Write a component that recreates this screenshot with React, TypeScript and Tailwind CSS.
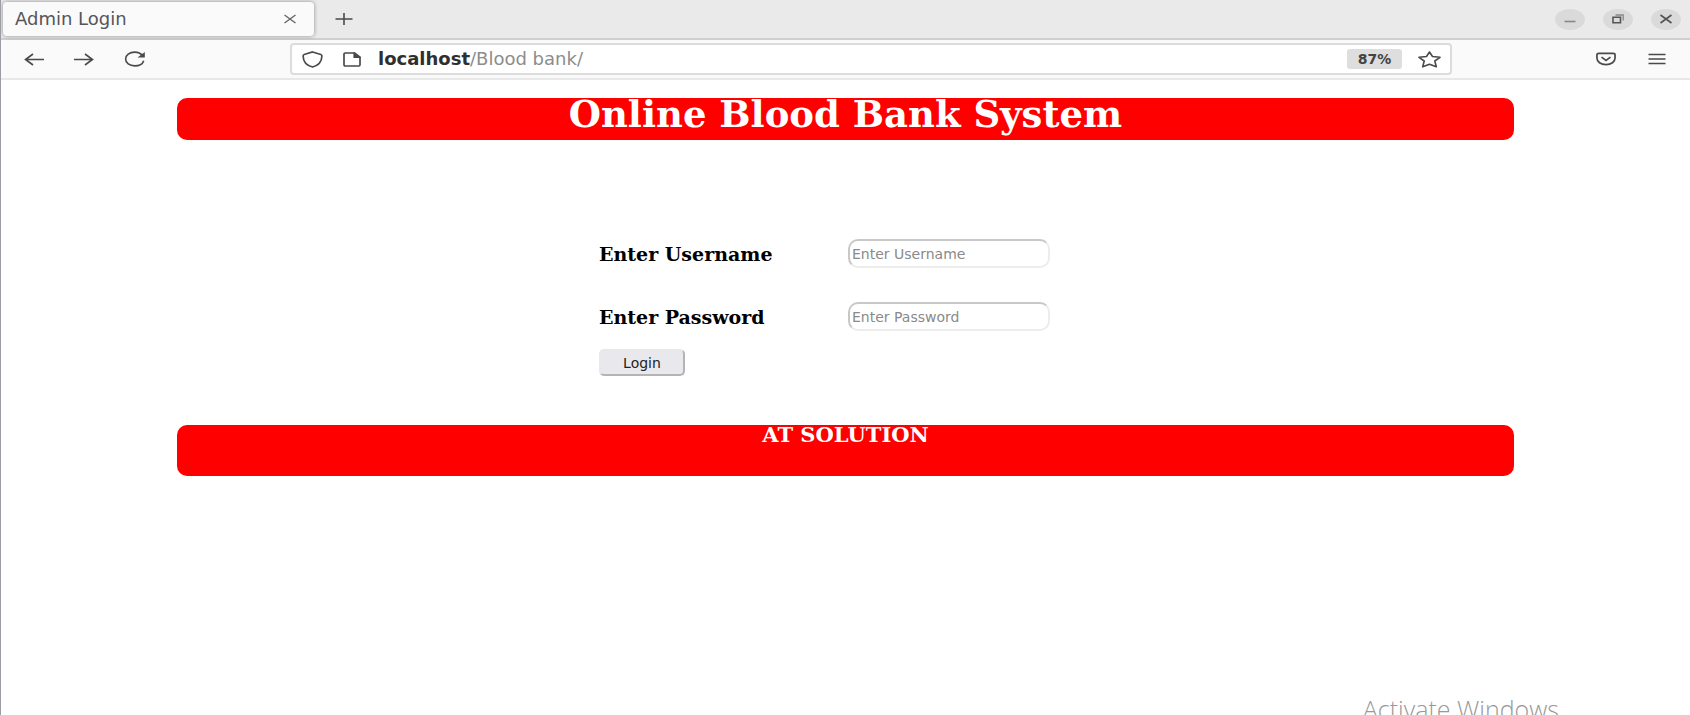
import type { ReactNode } from "react";

function IconButton({ label, className = "", children }: { label: string; className?: string; children: ReactNode }) {
  return (
    <button type="button" aria-label={label} className={`flex shrink-0 items-center justify-center ${className}`}>
      {children}
    </button>
  );
}

const stroke = { fill: "none", stroke: "currentColor", strokeWidth: 1.6 } as const;

function TabStrip() {
  return (
    <div className="flex h-10 items-center border-b-2 border-[#cfcfcf] bg-[#eaeaea] pl-0.5 pr-[9px]">
      <div className="flex h-[34px] w-[311px] items-center justify-between rounded-[4px] bg-[#fafafa] pl-3 pr-4 shadow-[0_0_4px_rgba(0,0,0,0.4)]">
        <span className="text-[18px] leading-6 text-[#55555c]">Admin Login</span>
        <IconButton label="Close tab" className="h-5 w-4 text-[#666]">
          <svg width="14" height="10" viewBox="0 0 14 10" {...stroke} strokeWidth={1.4}>
            <path d="M1.5 1l11 8M12.5 1l-11 8" />
          </svg>
        </IconButton>
      </div>
      <IconButton label="New tab" className="ml-4 h-7 w-7 text-[#4a4a4a]">
        <svg width="18" height="14" viewBox="0 0 18 14" {...stroke}>
          <path d="M0.5 7h17M9 1v12" />
        </svg>
      </IconButton>
      <div className="ml-auto flex gap-[18px] text-[#555]">
        <IconButton label="Minimize" className="h-[21px] w-[30px] rounded-[50%] bg-[#dadada]">
          <svg width="14" height="12" viewBox="0 0 14 12" {...stroke} stroke="#888">
            <path d="M1.5 8.5h11" />
          </svg>
        </IconButton>
        <IconButton label="Restore" className="h-[21px] w-[30px] rounded-[50%] bg-[#dadada]">
          <svg width="14" height="10" viewBox="0 0 14 10" {...stroke}>
            <path d="M2 3.2h7.5v5.6H2z" />
            <path d="M4.5 1h7.7v5.5" stroke="#888" strokeWidth="1.3" />
          </svg>
        </IconButton>
        <IconButton label="Close window" className="h-[21px] w-[30px] rounded-[50%] bg-[#dadada]">
          <svg width="14" height="10" viewBox="0 0 14 10" {...stroke} strokeWidth={1.7}>
            <path d="M1.5 1l11 8M12.5 1l-11 8" />
          </svg>
        </IconButton>
      </div>
    </div>
  );
}

function Toolbar() {
  return (
    <div className="flex h-10 items-center border-b-2 border-[#e8e8e8] bg-[#fafafa] text-[#4a4a4a]">
      <nav className="flex w-[289px] shrink-0 gap-[30px] pl-[23px]">
        <IconButton label="Back" className="h-5 w-5">
          <svg width="20" height="14" viewBox="0 0 20 14" {...stroke}>
            <path d="M20 7.500H1.500M9 2L1.500 7.500L9 13" />
          </svg>
        </IconButton>
        <IconButton label="Forward" className="h-5 w-5">
          <svg width="20" height="14" viewBox="0 0 20 14" {...stroke}>
            <path d="M0 7.500h18.500M11 2l7.500 5.500l-7.500 5.500" />
          </svg>
        </IconButton>
        <IconButton label="Reload" className="h-5 w-[22px]">
          <svg width="22" height="16" viewBox="0 0 22 16" {...stroke}>
            <path d="M18.300 4.500C16.800 2.400 14 1.100 10.700 1.100C5.500 1.100 1.600 4.100 1.600 8s3.900 6.900 9.100 6.900c4.500 0 8-2.100 9-5.200" />
            <path d="M20.800 1v5.500h-7.300z" fill="currentColor" stroke="none" />
          </svg>
        </IconButton>
      </nav>
      <div className="flex h-8 min-w-0 flex-1 items-center rounded-[4px] border-2 border-[#dcdcdc] bg-white pl-[10px] pr-[9px]">
        <svg className="shrink-0" width="21" height="17" viewBox="0 0 21 17" {...stroke} strokeWidth={1.7}>
          <path d="M10.500 1L18.800 3.500Q19.900 3.900 19.900 5C19.800 10.500 17 14.300 10.500 16C4 14.300 1.200 10.500 1.100 5Q1.100 3.900 2.200 3.500Z" />
        </svg>
        <svg className="ml-5 shrink-0" width="18" height="15" viewBox="0 0 18 15" {...stroke} strokeWidth={1.7}>
          <path d="M2.200 1h9.500l5.300 4.200v7.600q0 1.200-1.200 1.200H2.200Q1 14 1 12.800V2.200Q1 1 2.200 1z" />
          <path d="M11 1v4.500h6z" fill="currentColor" strokeWidth="1.2" />
        </svg>
        <div className="ml-[17px] whitespace-nowrap text-[18px] leading-6 text-[#8c8c8c]">
          <span className="font-bold text-[#2f2f2f]">localhost</span>/Blood bank/
        </div>
        <button type="button" className="ml-auto h-5 w-[55px] rounded-[3px] bg-[#dedede] text-[14px] font-bold leading-5 text-[#444]">
          87%
        </button>
        <IconButton label="Bookmark this page" className="ml-4 h-5 w-[23px]">
          <svg width="23" height="17" viewBox="0 0 23 17" {...stroke} strokeLinejoin="round">
            <path d="M11.500 1L14.500 5.500L22 6.300L16.800 10L18.300 15.800L11.500 13.200L4.700 15.800L6.200 10L1 6.300L8.500 5.500Z" />
          </svg>
        </IconButton>
      </div>
      <div className="flex w-[238px] shrink-0 justify-end gap-8 pr-6">
        <IconButton label="Save to Pocket" className="h-5 w-5">
          <svg width="21" height="14" viewBox="0 0 21 14" {...stroke} strokeWidth={1.8}>
            <path d="M3 1h15q2 0 2 1.600V6c0 4-4 7-9.500 7S1 10 1 6V2.600Q1 1 3 1z" />
            <path d="M5.800 5l4.700 3.500L15.200 5" />
          </svg>
        </IconButton>
        <IconButton label="Open menu" className="h-5 w-[18px]">
          <svg width="18" height="12" viewBox="0 0 18 12" {...stroke}>
            <path d="M0.500 1.500h17M0.500 6h17M0.500 10.500h17" />
          </svg>
        </IconButton>
      </div>
    </div>
  );
}

const labelClass = "font-['DejaVu_Serif',serif] text-[19px] font-bold leading-7 text-black";
const inputClass =
  "h-[29px] w-full min-w-0 rounded-[10px] border-2 border-b-[#ececec] border-l-[#c8c8c8] border-r-[#ececec] border-t-[#c8c8c8] bg-white px-0.5 text-[14px] text-black outline-none placeholder:text-[#8a8a8a] placeholder:opacity-100";

function LoginForm() {
  return (
    <form className="mt-[99px] flex justify-center pr-[42px]" onSubmit={(event) => event.preventDefault()}>
      <div>
        <div className="grid grid-cols-[249px_202px] items-center gap-y-[34px]">
          <label htmlFor="username" className={labelClass}>Enter Username</label>
          <input id="username" type="text" placeholder="Enter Username" className={inputClass} />
          <label htmlFor="password" className={labelClass}>Enter Password</label>
          <input id="password" type="password" placeholder="Enter Password" className={inputClass} />
        </div>
        <button
          type="submit"
          className="mt-[18px] block h-[27px] w-[86px] rounded-[5px] border-2 border-b-[#b4b4b4] border-l-[#e8e8ec] border-r-[#b4b4b4] border-t-[#e8e8ec] bg-[#e9e9ed] text-[14px] leading-5 text-[#222]"
        >
          Login
        </button>
      </div>
    </form>
  );
}

export default function App() {
  return (
    <div className="relative flex min-h-screen flex-col overflow-hidden border-l border-[#9a9ea3] bg-white font-['DejaVu_Sans',sans-serif]">
      <TabStrip />
      <Toolbar />
      <main className="px-44 pt-[18px]">
        <header className="h-[42px] rounded-[10px] bg-[#ff0000] text-center">
          <h1 className="font-['DejaVu_Serif',serif] text-[37px] font-bold leading-8 text-white">Online Blood Bank System</h1>
        </header>
        <LoginForm />
        <footer className="mt-[49px] h-[51px] rounded-[10px] bg-[#ff0000] text-center">
          <h2 className="font-['DejaVu_Serif',serif] text-[21px] font-bold leading-5 text-white">AT SOLUTION</h2>
        </footer>
      </main>
      <div className="absolute -bottom-3 right-[131px] whitespace-nowrap font-['Open_Sans',sans-serif] text-[25px] font-light leading-9 text-[#999999]">
        Activate Windows
      </div>
    </div>
  );
}
